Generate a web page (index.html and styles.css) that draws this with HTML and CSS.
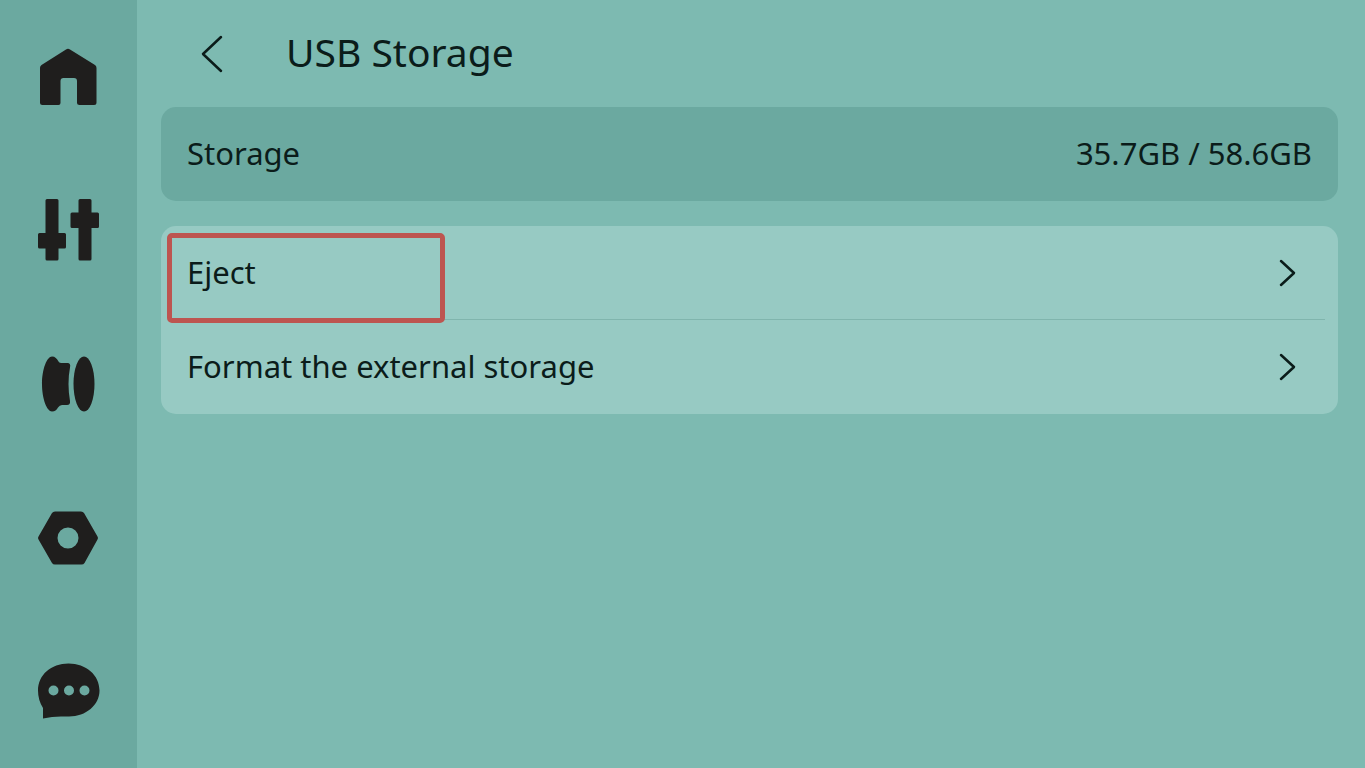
FILE: index.html
```html
<!DOCTYPE html>
<html lang="en">
<head>
    <meta charset="UTF-8">
    <meta name="viewport" content="width=device-width, initial-scale=1.0">
    <title>USB Storage</title>
    <link rel="stylesheet" href="styles.css">
</head>
<body>
    <nav class="sidebar">
        <a href="#home" class="nav-item" aria-label="Home">
            <svg viewBox="0 0 64 64"><path d="M30 4.500Q32 3 34 4.500L59 20Q60.500 21 60.500 23V57.500Q60.500 60 58 60H43.500Q41 60 41 58V36Q41 33 38 33H27.500Q24.500 33 24.500 36V58Q24.500 60 22.500 60H6.500Q4 60 4 57.500V23Q4 21 5.500 20Z"/></svg>
        </a>
        <a href="#control" class="nav-item" aria-label="Control">
            <svg viewBox="0 0 64 64"><path d="M11 1H21Q22.500 1 22.500 2.500V35H28.500Q30 35 30 36.500V49Q30 50.500 28.500 50.500H22.500V61Q22.500 62.500 21 62.500H11Q9.500 62.500 9.500 61V50.500H3.500Q2 50.500 2 49V36.500Q2 35 3.500 35H9.500V2.500Q9.500 1 11 1ZM44 1H54Q55.500 1 55.500 2.500V14.500H61.500Q63 14.500 63 16V28.500Q63 30 61.500 30H55.500V61Q55.500 62.500 54 62.500H44Q42.500 62.500 42.500 61V30H36Q34.500 30 34.500 28.500V16Q34.500 14.500 36 14.500H42.500V2.500Q42.500 1 44 1Z"/></svg>
        </a>
        <a href="#filament" class="nav-item" aria-label="Filament">
            <svg viewBox="0 0 64 64"><path d="M16 4.500C19 4.500 21 6.500 22.500 9.500Q23.500 11 25.500 11H31.500Q35 11 34 15.500C32 26 32 38 34 49Q34.500 53 31 53H26Q23.500 53 22 55.500C20.500 58 19 59.500 16 59.500C11 59.500 6 47 6 32S11 4.500 16 4.500Z"/><ellipse cx="48" cy="32" rx="10.500" ry="27.500"/></svg>
        </a>
        <a href="#settings" class="nav-item" aria-label="Settings">
            <svg viewBox="0 0 64 64"><path fill-rule="evenodd" d="M19 5.500H45Q47 5.500 48 7L61.500 30.500Q62.500 32 61.500 33.500L48.500 57Q47.500 58.500 45.500 58.500H19Q17 58.500 16 57L2.500 33.500Q1.500 32 2.500 30.500L16 7Q17 5.500 19 5.500ZM32 21.500A10.500 10.500 0 1 0 32 42.500A10.500 10.500 0 1 0 32 21.500Z"/></svg>
        </a>
        <a href="#messages" class="nav-item" aria-label="Messages">
            <svg viewBox="0 0 64 64"><path fill-rule="evenodd" d="M32.500 4.500C50 4.500 63.500 16 63.500 31.500C63.500 46 50 57.500 33 57.500H25Q16 57.500 7 59.500V49Q2 41 2 31.500C2 16 15 4.500 32.500 4.500ZM17.500 26.500a5 5 0 1 0 0 10a5 5 0 1 0 0-10ZM33 26.500a5 5 0 1 0 0 10a5 5 0 1 0 0-10ZM48.500 26.500a5 5 0 1 0 0 10a5 5 0 1 0 0-10Z"/></svg>
        </a>
    </nav>

    <main class="content">
        <header class="header">
            <button class="back" aria-label="Back">
                <svg viewBox="0 0 24 40"><path d="M21 3L3 20L21 37"/></svg>
            </button>
            <h1>USB Storage</h1>
        </header>

        <div class="card info">
            <span class="label">Storage</span>
            <span class="label">35.7GB / 58.6GB</span>
        </div>

        <div class="card actions">
            <button class="row selected">
                <span class="label">Eject</span>
                <svg class="arrow" viewBox="0 0 18 28"><path d="M2 2L15 14L2 26"/></svg>
            </button>
            <button class="row">
                <span class="label">Format the external storage</span>
                <svg class="arrow" viewBox="0 0 18 28"><path d="M2 2L15 14L2 26"/></svg>
            </button>
        </div>
    </main>
</body>
</html>
```
FILE: styles.css
```css
*,
*::before,
*::after {
    box-sizing: border-box;
}
body {
    display: flex;
    min-height: 100vh;
    margin: 0;
    background-color: #7dbab1;
    color: #0b1c1a;
    font-family: "Noto Sans", sans-serif;
    font-size: 31px;
    line-height: 40px;
}
button {
    border: none;
    padding: 0;
    background: none;
    color: inherit;
    font: inherit;
    cursor: pointer;
}
.sidebar {
    display: flex;
    flex-direction: column;
    flex: 0 0 137px;
    padding-right: 1px;
    background-color: #6ba9a0;
}
.nav-item {
    display: flex;
    flex: 1;
    align-items: center;
    justify-content: center;
}
.nav-item svg {
    width: 64px;
    height: 64px;
    fill: #1f1e1d;
}
.content {
    flex: 1;
    padding: 0 27px 26px 24px;
}
.header {
    display: flex;
    align-items: center;
    gap: 62px;
    height: 107px;
    padding-left: 39px;
}
.back {
    display: flex;
}
.back svg {
    width: 24px;
    height: 40px;
}
.back path,
.arrow path {
    fill: none;
    stroke: #0b1c1a;
    stroke-width: 2.5;
    stroke-linecap: round;
    stroke-linejoin: round;
}
h1 {
    margin: 0;
    padding-bottom: 4px;
    font-size: 39px;
    font-weight: 400;
}
.card {
    border-radius: 15px;
}
.label {
    padding-bottom: 3px;
}
.info {
    display: flex;
    align-items: center;
    justify-content: space-between;
    height: 94px;
    margin-bottom: 25px;
    padding: 0 26px;
    background-color: #6ba9a0;
}
.actions {
    background-color: #97cac3;
}
.row {
    position: relative;
    display: flex;
    align-items: center;
    justify-content: space-between;
    width: 100%;
    height: 94px;
    padding: 0 41px 0 26px;
}
.row:not(:last-child)::before {
    content: "";
    position: absolute;
    bottom: 0;
    left: 26px;
    right: 13px;
    height: 1px;
    background-color: #80b5ad;
}
.arrow {
    width: 18px;
    height: 28px;
}
/* Outline around the chosen action */
.selected::after {
    content: "";
    position: absolute;
    z-index: 1;
    top: 7px;
    left: 6px;
    width: 278px;
    height: 90px;
    border: 5px solid #bd5550;
    border-radius: 5px;
}
```
